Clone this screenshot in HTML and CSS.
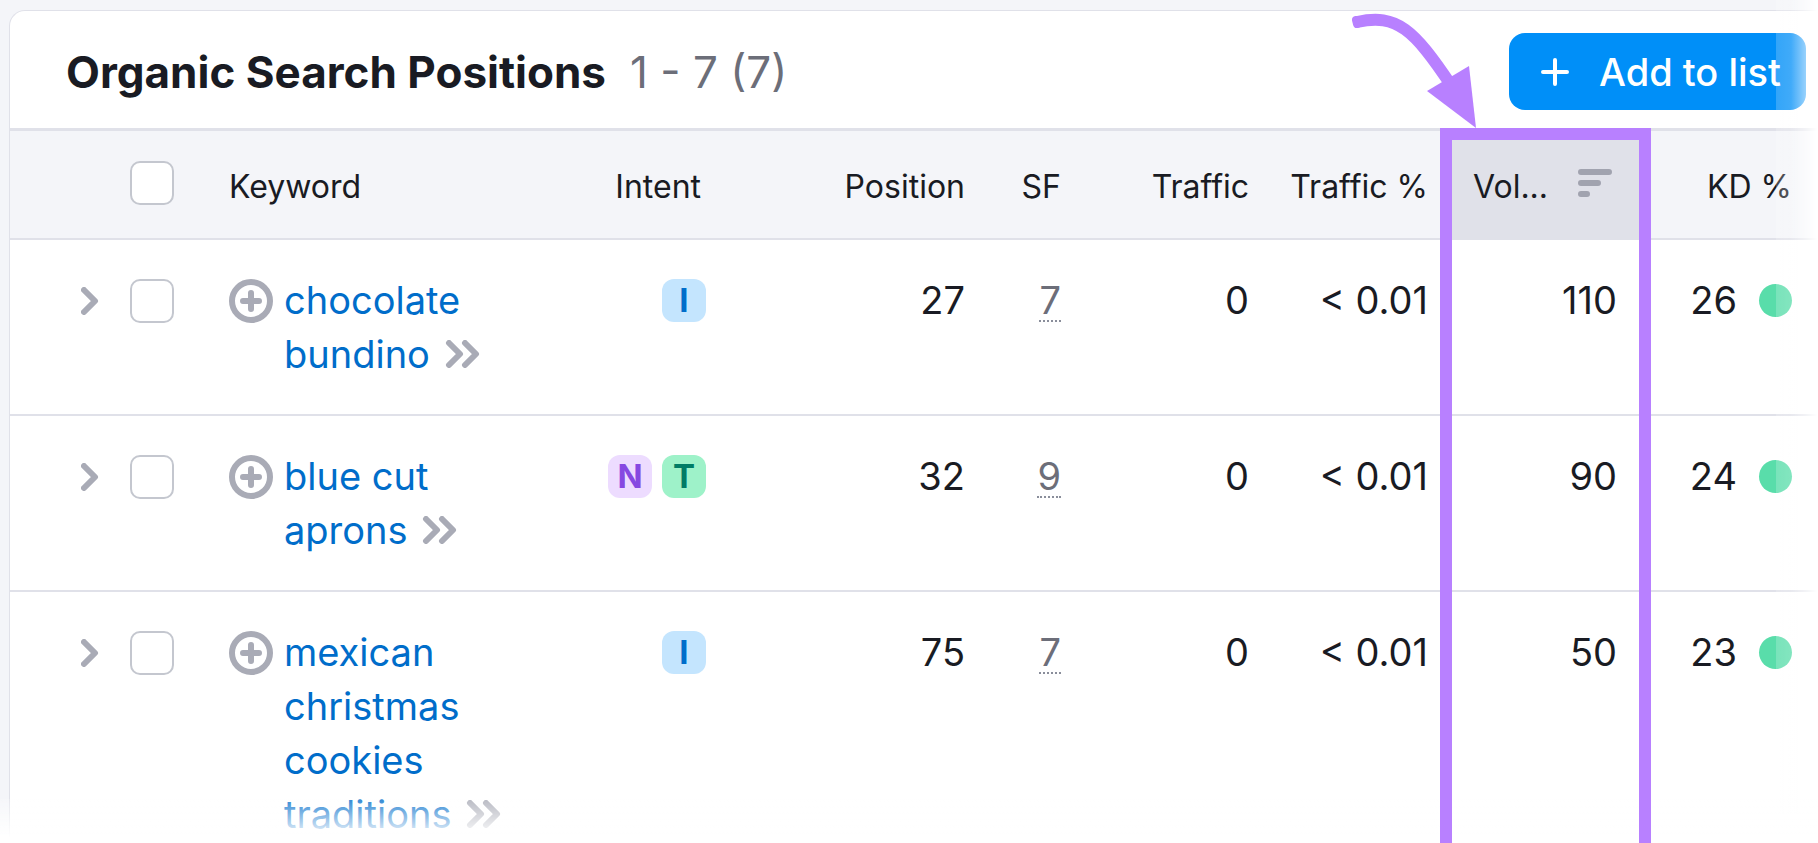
FILE: index.html
```html
<!DOCTYPE html>
<html lang="en">
<head>
    <meta charset="UTF-8">
    <meta name="viewport" content="width=device-width, initial-scale=1.0">
    <title>Organic Search Positions</title>
    <link rel="stylesheet" href="styles.css">
</head>
<body>

    <!-- Shared icons -->
    <svg class="sprite" aria-hidden="true">
        <symbol id="chevron" viewBox="0 0 18 28">
            <path d="M3 3 L14 14 L3 25" />
        </symbol>
        <symbol id="chevrons" viewBox="0 0 36 28">
            <path d="M4 3 L15 14 L4 25 M20 3 L31 14 L20 25" />
        </symbol>
        <symbol id="add-circle" viewBox="0 0 44 44">
            <circle cx="22" cy="22" r="19" />
            <path d="M22 14 V30 M14 22 H30" />
        </symbol>
    </svg>

    <main class="card">
        <header class="card-header">
            <h1>Organic Search Positions</h1>
            <span class="count">1 - 7 (7)</span>
            <button class="button" type="button">
                <svg class="plus" viewBox="0 0 28 28" aria-hidden="true"><path d="M14 2 V26 M2 14 H26" /></svg>
                Add to list
            </button>
        </header>

        <table class="positions">
            <colgroup>
                <col class="col-expand">
                <col class="col-check">
                <col class="col-keyword">
                <col class="col-intent">
                <col class="col-position">
                <col class="col-sf">
                <col class="col-traffic">
                <col class="col-share">
                <col class="col-volume">
                <col class="col-kd">
            </colgroup>
            <thead>
                <tr>
                    <th></th>
                    <th class="check"><input type="checkbox" aria-label="Select all keywords"></th>
                    <th class="keyword">Keyword</th>
                    <th class="intent">Intent</th>
                    <th>Position</th>
                    <th>SF</th>
                    <th>Traffic</th>
                    <th class="share">Traffic %</th>
                    <th class="volume">
                        <div class="sort">
                            Vol...
                            <svg class="sort-icon" viewBox="0 0 34 28" aria-hidden="true"><path d="M3 3 H31 M3 14 H20 M3 25 H9" /></svg>
                        </div>
                        <span class="highlight"></span>
                        <svg class="arrow" viewBox="0 0 130 120" aria-hidden="true">
                            <path class="arrow-line" d="M5 13 C45 4 62 21 99 76" />
                            <path class="arrow-start" d="M4 11 L5 15" />
                            <path class="arrow-head" d="M75 82 L117 57 L124 119 Z" />
                        </svg>
                    </th>
                    <th class="kd">KD %</th>
                </tr>
            </thead>
            <tbody>
                <tr>
                    <td class="expand"><button class="icon-button" type="button" aria-label="Expand row"><svg class="icon chevron"><use href="#chevron" /></svg></button></td>
                    <td class="check"><input type="checkbox" aria-label="Select chocolate bundino"></td>
                    <td class="keyword">
                        <div class="phrase">
                            <button class="icon-button" type="button" aria-label="Add keyword"><svg class="icon add"><use href="#add-circle" /></svg></button>
                            <a href="#">chocolate bundino <svg class="icon chevrons"><use href="#chevrons" /></svg></a>
                        </div>
                    </td>
                    <td class="intent"><div class="badges"><span class="badge info">I</span></div></td>
                    <td>27</td>
                    <td><span class="features">7</span></td>
                    <td>0</td>
                    <td class="share">&lt; 0.01</td>
                    <td class="volume">110</td>
                    <td class="kd"><div class="difficulty">26 <span class="dot"></span></div></td>
                </tr>
                <tr>
                    <td class="expand"><button class="icon-button" type="button" aria-label="Expand row"><svg class="icon chevron"><use href="#chevron" /></svg></button></td>
                    <td class="check"><input type="checkbox" aria-label="Select blue cut aprons"></td>
                    <td class="keyword">
                        <div class="phrase">
                            <button class="icon-button" type="button" aria-label="Add keyword"><svg class="icon add"><use href="#add-circle" /></svg></button>
                            <a href="#">blue cut aprons <svg class="icon chevrons"><use href="#chevrons" /></svg></a>
                        </div>
                    </td>
                    <td class="intent"><div class="badges"><span class="badge nav">N</span><span class="badge trans">T</span></div></td>
                    <td>32</td>
                    <td><span class="features">9</span></td>
                    <td>0</td>
                    <td class="share">&lt; 0.01</td>
                    <td class="volume">90</td>
                    <td class="kd"><div class="difficulty">24 <span class="dot"></span></div></td>
                </tr>
                <tr>
                    <td class="expand"><button class="icon-button" type="button" aria-label="Expand row"><svg class="icon chevron"><use href="#chevron" /></svg></button></td>
                    <td class="check"><input type="checkbox" aria-label="Select mexican christmas cookies traditions"></td>
                    <td class="keyword">
                        <div class="phrase">
                            <button class="icon-button" type="button" aria-label="Add keyword"><svg class="icon add"><use href="#add-circle" /></svg></button>
                            <a href="#">mexican christmas cookies traditions <svg class="icon chevrons"><use href="#chevrons" /></svg></a>
                        </div>
                    </td>
                    <td class="intent"><div class="badges"><span class="badge info">I</span></div></td>
                    <td>75</td>
                    <td><span class="features">7</span></td>
                    <td>0</td>
                    <td class="share">&lt; 0.01</td>
                    <td class="volume">50</td>
                    <td class="kd"><div class="difficulty">23 <span class="dot"></span></div></td>
                </tr>
            </tbody>
        </table>
    </main>

    <div class="fade fade-right"></div>
    <div class="fade fade-bottom"></div>

</body>
</html>
```
FILE: styles.css
```css
* {
    box-sizing: border-box;
}
body {
    font-family: Inter, "Liberation Sans", sans-serif;
    margin: 0;
    height: 100vh;
    overflow: hidden;
    background-color: #f4f5f9;
    color: #191b23;
}
.sprite {
    display: none;
}
.card {
    margin: 10px 0 0 9px;
    background-color: #fff;
    border: 1px solid #e0e1e9;
    border-right: none;
    border-radius: 16px 0 0 0;
}
.card-header {
    display: flex;
    align-items: center;
    padding: 22px 12px 18px 56px;
}
.card-header h1 {
    margin: 0;
    font-size: 44px;
    line-height: 54px;
    font-weight: 700;
}
.count {
    margin-left: 24px;
    font-size: 44px;
    line-height: 54px;
    font-optical-sizing: none;
    color: #6c6e79;
}
.button {
    display: flex;
    align-items: center;
    gap: 30px;
    margin-left: auto;
    height: 77px;
    padding: 0 25px 0 32px;
    border: none;
    border-radius: 16px;
    background-color: #008ff8;
    color: #fff;
    font-family: inherit;
    font-size: 38px;
    font-weight: 500;
    white-space: nowrap;
    cursor: pointer;
}
.plus {
    width: 28px;
    height: 28px;
    fill: none;
    stroke: #fff;
    stroke-width: 4;
    stroke-linecap: round;
}

/* Table */
.positions {
    width: 100%;
    table-layout: fixed;
    border-collapse: separate;
    border-spacing: 0;
}
.col-expand { width: 120px; }
.col-check { width: 99px; }
.col-intent { width: 150px; }
.col-position { width: 259px; }
.col-sf { width: 96px; }
.col-traffic { width: 188px; }
.col-share { width: 203px; }
.col-volume { width: 187px; }
.col-kd { width: 179px; }
th {
    height: 112px;
    padding: 4px 0 0;
    background-color: #f4f5f9;
    border-top: 3px solid #e0e1e9;
    border-bottom: 2px solid #e0e1e9;
    font-size: 32px;
    line-height: 44px;
    font-weight: 400;
    text-align: right;
    white-space: nowrap;
}
td {
    padding: 33px 0;
    border-bottom: 2px solid #e0e1e9;
    font-size: 38px;
    line-height: 54px;
    text-align: right;
    vertical-align: top;
}
.keyword, th.keyword, .check, th.check {
    text-align: left;
}
th.intent {
    padding-right: 5px;
}
.share {
    padding-right: 24px;
}
td.volume {
    padding-right: 22px;
}
.kd {
    padding-right: 26px;
}
input[type="checkbox"] {
    appearance: none;
    display: block;
    width: 44px;
    height: 44px;
    margin: 0;
    border: 2px solid #c4c7cf;
    border-radius: 10px;
    background-color: #fff;
}
th.check {
    padding-top: 0;
}
th.check input {
    margin-bottom: 4px;
}
td.check input {
    margin-top: 6px;
}

/* Icons */
.icon-button {
    display: block;
    padding: 0;
    border: none;
    background: none;
    cursor: pointer;
}
.icon {
    display: block;
    fill: none;
    stroke: #a9abb6;
    stroke-width: 6;
    stroke-linecap: round;
    stroke-linejoin: round;
}
.chevron {
    width: 18px;
    height: 28px;
    margin: 14px 0 0 71px;
}
.add {
    width: 44px;
    height: 44px;
    margin-top: 6px;
}
.chevrons {
    display: inline-block;
    width: 36px;
    height: 28px;
    margin-left: 4px;
}
.phrase {
    display: flex;
    align-items: flex-start;
    gap: 11px;
    max-width: 300px;
}
.phrase a {
    color: #006dca;
    text-decoration: none;
}

/* Intent badges */
.badges {
    display: flex;
    justify-content: flex-end;
    gap: 10px;
    padding-top: 6px;
}
.badge {
    width: 44px;
    height: 43px;
    border-radius: 12px;
    font-size: 33px;
    line-height: 43px;
    font-weight: 700;
    text-align: center;
}
.info {
    background-color: #c4e5fe;
    color: #006dca;
}
.nav {
    background-color: #eddcff;
    color: #8649e1;
}
.trans {
    background-color: #9ef2c9;
    color: #007c65;
}
.features {
    display: inline-block;
    line-height: 40px;
    border-bottom: 2px dotted #8a8e9b;
    color: #6c6e79;
}
.difficulty {
    display: flex;
    justify-content: flex-end;
    align-items: center;
    gap: 22px;
}
.dot {
    width: 33px;
    height: 33px;
    border-radius: 50%;
    background-color: #59ddaa;
}

/* Sorted column and its marker */
th.volume {
    position: relative;
    background-color: #e0e1e9;
}
.sort {
    display: flex;
    align-items: center;
    justify-content: space-between;
    padding: 0 27px 0 21px;
}
.sort-icon {
    width: 34px;
    height: 28px;
    margin-bottom: 8px;
    fill: none;
    stroke: #a1a3af;
    stroke-width: 6;
    stroke-linecap: round;
}
.highlight {
    position: absolute;
    z-index: 2;
    top: -3px;
    left: -12px;
    right: -12px;
    height: 100vh;
    border: 12px solid #b880ff;
    pointer-events: none;
}
.arrow {
    position: absolute;
    z-index: 2;
    left: -100px;
    bottom: 109px;
    width: 130px;
    height: 120px;
}
.arrow-line, .arrow-start {
    fill: none;
    stroke: #b880ff;
    stroke-width: 12;
}
.arrow-start {
    stroke-width: 8;
    stroke-linecap: round;
}
.arrow-head {
    fill: #b880ff;
}

/* Soft edges */
.fade {
    position: fixed;
    z-index: 1;
    right: 0;
    bottom: 0;
    pointer-events: none;
}
.fade-right {
    top: 0;
    width: 42px;
    background: linear-gradient(to right, rgba(255, 255, 255, 0.2), rgba(255, 255, 255, 0.25) 15px, rgba(255, 255, 255, 0.6) 30px, #fff);
}
.fade-bottom {
    left: 0;
    height: 44px;
    background: linear-gradient(to bottom, rgba(255, 255, 255, 0.2), #fff 90%);
}
```
